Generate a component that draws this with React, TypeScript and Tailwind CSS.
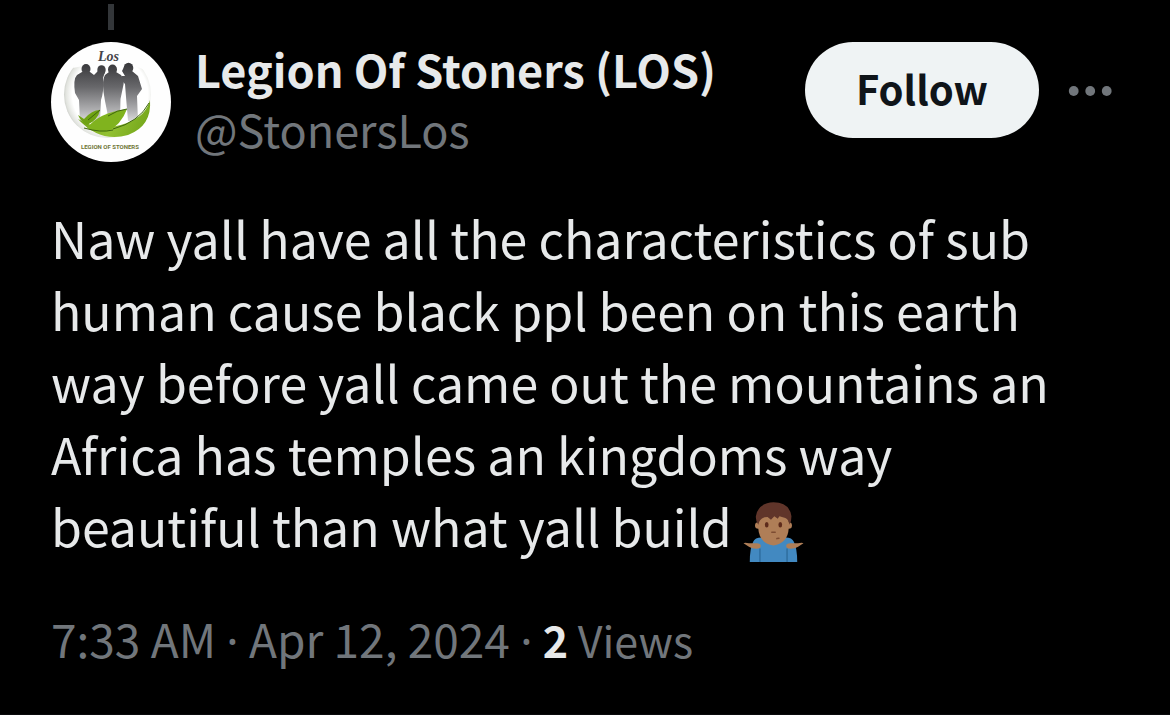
const LINK = "hover:underline";

function Avatar() {
  return (
    <svg viewBox="0 0 120 120" className="size-[120px] rounded-full" role="img" aria-label="Legion Of Stoners">
      <defs>
        <linearGradient id="people" x1="0" y1="22" x2="0" y2="80" gradientUnits="userSpaceOnUse">
          <stop offset="0" stopColor="#39393c" />
          <stop offset="0.4" stopColor="#68686b" />
          <stop offset="0.8" stopColor="#b0b0b2" />
          <stop offset="1" stopColor="#dedede" />
        </linearGradient>
        <linearGradient id="leaf" x1="30" y1="70" x2="90" y2="95" gradientUnits="userSpaceOnUse">
          <stop offset="0" stopColor="#6f9f16" />
          <stop offset="0.5" stopColor="#93c132" />
          <stop offset="1" stopColor="#76a81c" />
        </linearGradient>
        <radialGradient id="globe" cx="0.53" cy="0.5" r="0.53">
          <stop offset="0.82" stopColor="#ffffff" />
          <stop offset="0.96" stopColor="#e2e4df" />
          <stop offset="1" stopColor="#cfd1cc" />
        </radialGradient>
      </defs>
      <rect width="120" height="120" fill="#fefefe" />
      <circle cx="56.5" cy="52.5" r="43.5" fill="url(#globe)" />
      <path d="M22 26 Q34 2 58 4 Q82 4 94 28 L84 24 H32 Z" fill="#fefefe" />
      <g fill="url(#people)">
        <ellipse cx="35" cy="27" rx="4.500" ry="5" />
        <ellipse cx="50.500" cy="28" rx="4.200" ry="4.800" />
        <ellipse cx="61.500" cy="27.500" rx="4.500" ry="5" />
        <ellipse cx="77.500" cy="26" rx="4.800" ry="5.200" />
        <path d="M31 30 H39 L43 33 L47 29 L54 30 L52 36 Q53 50 50 58 L49 80 H29 L28 58 L24 51 Q22 37 26 33Z" />
        <path d="M58 30 H65 L70 33 Q74 38 72 45 L69.500 57 L69 79 H58 L54 59 L52.500 50 Q51 38 54 33Z" />
        <path d="M73 25 L75 30 L81 29 L87 34 L91 47 L86 54 L87 79 H77 L75 55 L74 42 L70 38 L71 34 L74 34 L71 29Z" />
      </g>
      <path d="M27 77 Q50 91 76 81 Q95 74 99 58 Q101 84 77 93 Q49 101 27 77Z" fill="url(#leaf)" />
      <path d="M27 73 L33 77 Q41 68 49 68 Q47 78 36 83 Q30 80 27 73Z" fill="#6fa313" />
      <path d="M36 86 Q47 71 76 67 Q70 83 57 89 Q45 91 36 86Z" fill="#80b31e" />
      <path d="M57 74 Q66 68 76 67 M62 87 Q88 80 98 61 M33 86 Q50 91 62 88 M37 78 L49 68" fill="none" stroke="#3f660f" strokeWidth="1" />
      <text x="47" y="19" fontFamily="'Liberation Serif', serif" fontStyle="italic" fontWeight="700" fontSize="14" fill="#444449">Los</text>
      <text x="30" y="107" fontFamily="'Liberation Sans Narrow', Roboto, sans-serif" fontWeight="700" fontSize="6" fill="#6f7636">LEGION OF STONERS</text>
    </svg>
  );
}

function Shrug() {
  return (
    <svg viewBox="0 0 36 36" className="inline-block size-[61px] align-[-15px]" role="img" aria-label="Man shrugging">
      <path d="M4 36 Q4 28 6 24 Q7 21.500 11 21.500 H25 Q29 21.500 30 24 Q32 28 32 36Z" fill="#4289c1" />
      <path d="M10 28 V36 M26 28 V36" stroke="#2a6797" strokeWidth="0.7" />
      <path d="M0.300 25 Q1 24.300 3.500 25 L8 25 Q10.500 25 10.500 26.600 Q10.500 28.200 8 28.200 Q5 28.200 3.500 27Z" fill="#af7e57" />
      <path d="M35.700 25 Q35 24.300 32.500 25 L28 25 Q25.500 25 25.500 26.600 Q25.500 28.200 28 28.200 Q31 28.200 32.500 27Z" fill="#af7e57" />
      <circle cx="9" cy="14.500" r="1.900" fill="#af7e57" />
      <circle cx="27" cy="14.500" r="1.900" fill="#af7e57" />
      <path d="M9 7 H27 V16 Q26.500 25 18 26.300 Q9.500 25 9 16Z" fill="#af7e57" />
      <path d="M18 0.800 Q27.500 1 28.600 9 Q28.600 12 27.500 14 Q27 11 25 10 L21.500 9 L20.500 10.500 L18.500 9 L16.500 11 L14.500 9.500 Q10 9.500 9 14 Q7.400 12 7.600 9 Q9 1 18 0.800Z" fill="#60352a" />
      <ellipse cx="14" cy="14" rx="1.100" ry="1.600" fill="#5d2b1b" />
      <ellipse cx="22" cy="14" rx="1.100" ry="1.600" fill="#5d2b1b" />
      <path d="M17 18.500 H19 M20 22.200 L21.200 22" stroke="#7d4c32" strokeWidth="0.9" strokeLinecap="round" />
    </svg>
  );
}

export default function App() {
  return (
    <main className="min-h-screen bg-black font-['Noto_Sans_CJK_SC',sans-serif] text-[#e7e9ea]">
      <article className="border-b border-[#0a0a0c] pt-1 pr-[57px] pb-10 pl-[51px]">
        <div className="flex w-[120px] justify-center">
          <div className="h-[26px] w-[6px] bg-[#333639]" />
        </div>
        <header className="mt-3 flex items-start">
          <a href="#profile" className="shrink-0">
            <Avatar />
          </a>
          <div className="ml-6 flex min-w-0 flex-1 flex-col gap-[6px] text-[45px] leading-[54px]">
            <h1 className="font-bold"><a href="#profile" className={LINK}>Legion Of Stoners (LOS)</a></h1>
            <p className="text-[#71767b]">@StonersLos</p>
          </div>
          <button type="button" className="h-24 w-[234px] shrink-0 rounded-full bg-[#eff3f4] pb-1 text-[40px] leading-[60px] font-bold text-[#0f1419]">
            Follow
          </button>
          <button type="button" aria-label="More" className="ml-7 flex h-24 shrink-0 items-center pt-[2px] text-[#71767b]">
            <svg viewBox="0 0 46 12" className="h-3 w-[46px]" fill="currentColor">
              <circle cx="6.700" cy="6" r="4.900" />
              <circle cx="23.200" cy="6" r="4.900" />
              <circle cx="39.700" cy="6" r="4.900" />
            </svg>
          </button>
        </header>
        <p className="mt-[39px] pr-8 text-[50px] leading-[72px]">
          Naw yall have all the characteristics of sub human cause black ppl been on this earth way before yall came out the mountains an Africa has temples an kingdoms way beautiful than what yall build <Shrug />
        </p>
        <p className="mt-[42px] text-[46px] leading-[68px] text-[#71767b]">
          <time dateTime="2024-04-12T07:33">
            7:33 AM <span className="font-['Noto_Sans']">·</span> Apr 12, 2024
          </time>{" "}
          <span className="font-['Noto_Sans']">·</span>{" "}
          <a href="#views" className="text-[43px]">
            <strong className="text-[#e7e9ea]">2</strong> Views
          </a>
        </p>
      </article>
    </main>
  );
}
